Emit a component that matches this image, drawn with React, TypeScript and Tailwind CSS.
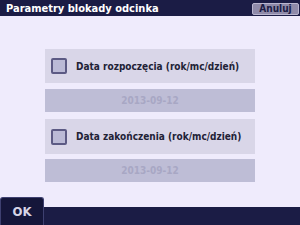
export default function App() {
  return (
    <div className="relative w-[300px] h-[225px] flex flex-col bg-[#efebfc] font-['DejaVu_Sans',sans-serif] font-stretch-condensed overflow-hidden">
      <div className="h-[16px] bg-[#1b1c45] flex items-center justify-between pl-[6px] pr-[1px]">
        <span className="text-white font-bold text-[11px] leading-none">Parametry blokady odcinka</span>
        <button className="mt-[1px] h-[12px] w-[47px] bg-[#8f8aa9] border border-[#b9b5cf] rounded-[2px] text-[#1b1c45] font-bold text-[10px] leading-none flex items-center justify-center">
          Anuluj
        </button>
      </div>

      <div className="flex-1 flex flex-col px-[45px] pt-[33px]">
        <div className="h-[34px] bg-[#d9d6e8] flex items-center pl-[6px] gap-[9px]">
          <div className="w-[16px] h-[16px] bg-[#bbbad6] border-2 border-[#5c5a84] rounded-[2px]" />
          <span className="text-[#222236] font-bold text-[10px]">Data rozpoczęcia (rok/mc/dzień)</span>
        </div>
        <div className="mt-[6px] h-[23px] bg-[#bebdd6] flex items-center justify-center text-[#a8a7c4] font-bold text-[10px]">
          2013-09-12
        </div>

        <div className="mt-[7px] h-[35px] bg-[#d9d6e8] flex items-center pl-[6px] gap-[9px]">
          <div className="w-[16px] h-[16px] bg-[#bbbad6] border-2 border-[#5c5a84] rounded-[2px]" />
          <span className="text-[#222236] font-bold text-[10px]">Data zakończenia (rok/mc/dzień)</span>
        </div>
        <div className="mt-[5px] h-[23px] bg-[#bebdd6] flex items-center justify-center text-[#a8a7c4] font-bold text-[10px]">
          2013-09-12
        </div>
      </div>

      <div className="relative h-[18px] bg-[#1b1c45]">
        <button className="absolute left-0 bottom-0 w-[44px] h-[28px] bg-[#15163a] border border-[#3e4070] border-b-0 rounded-t-[3px] text-[#d6d4e6] font-bold text-[13px] flex items-center justify-center">
          OK
        </button>
      </div>
    </div>
  );
}
